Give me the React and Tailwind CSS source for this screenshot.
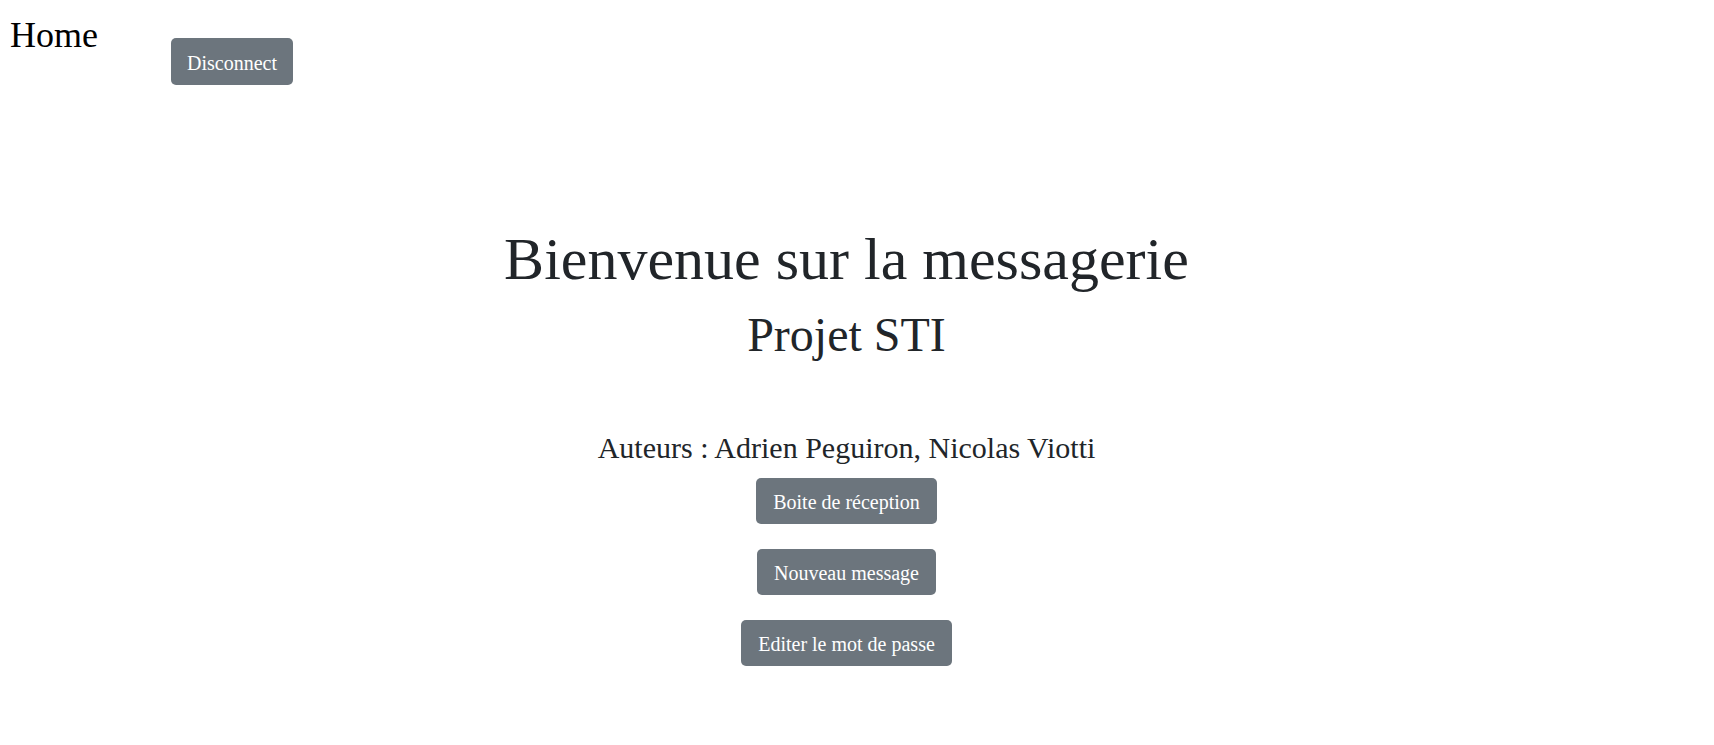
import React from "react";

const btn =
  "inline-block h-[46px] pt-[3px] bg-[#6c757d] text-white text-[20px] leading-[43px] rounded-[5px]";

export default function App() {
  return (
    <div
      className="min-h-screen bg-white text-[#212529]"
      style={{ fontFamily: '"Liberation Serif", "Times New Roman", serif' }}
    >
      {/* Header */}
      <div className="flex items-start pl-[10px]">
        <div className="w-[161px] pt-[17px] text-[36px] leading-[36px] text-black">
          Home
        </div>
        <button className={`${btn} mt-[38px] h-[47px] px-[16px]`}>
          Disconnect
        </button>
      </div>

      {/* Main */}
      <div className="flex flex-col items-center pr-[21px] text-center">
        <h1 className="mt-[144px] text-[60px] leading-[60px]">
          Bienvenue sur la messagerie
        </h1>
        <h2 className="mt-[22px] text-[48px] leading-[48px]">Projet STI</h2>
        <p className="mt-[74px] text-[30px] leading-[30px]">
          Auteurs : Adrien Peguiron, Nicolas Viotti
        </p>
        <div className="mt-[15px] flex flex-col items-center gap-[25px]">
          <button className={`${btn} px-[17.5px]`}>Boite de réception</button>
          <button className={`${btn} px-[17.5px]`}>Nouveau message</button>
          <button className={`${btn} px-[17.5px]`}>Editer le mot de passe</button>
        </div>
      </div>
    </div>
  );
}
